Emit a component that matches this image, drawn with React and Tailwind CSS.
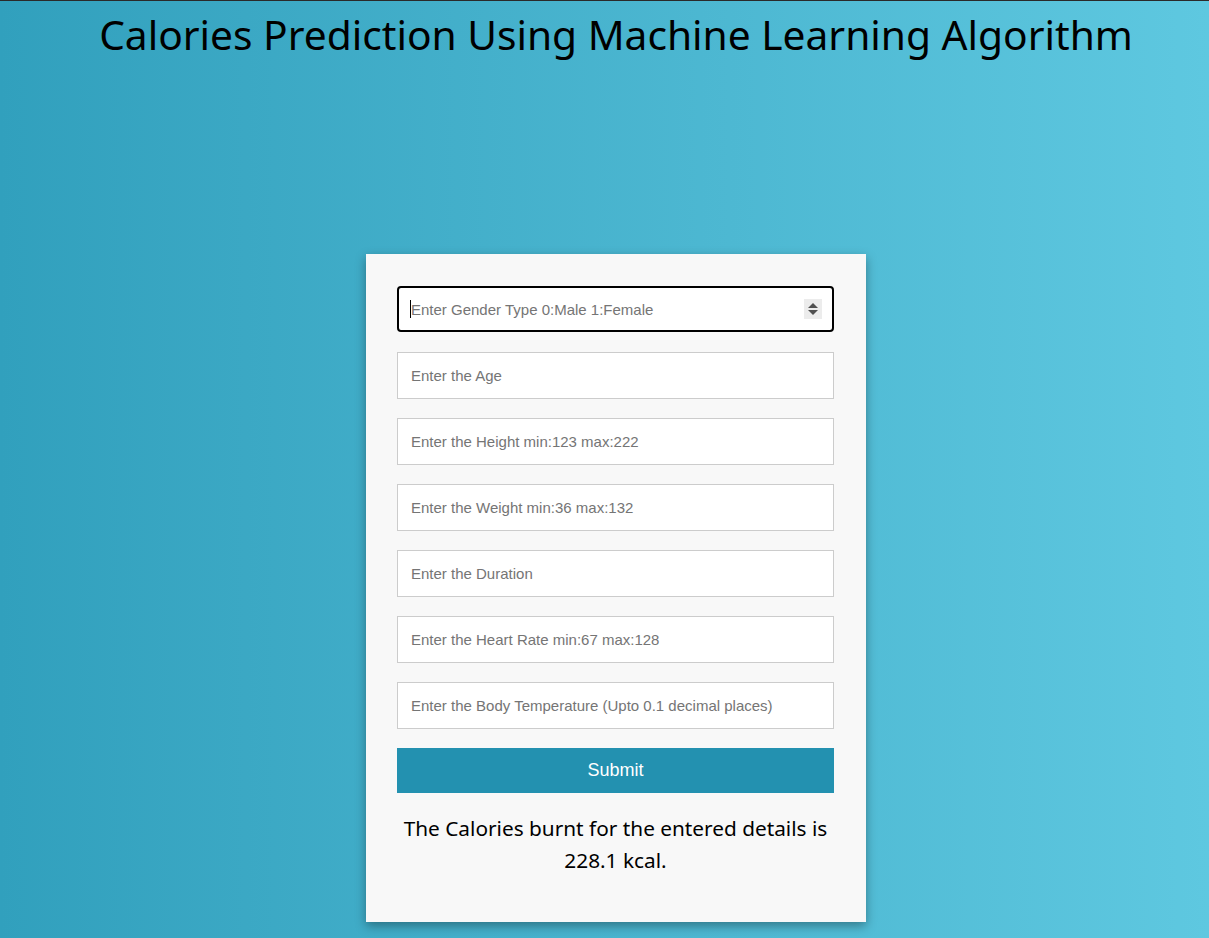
import { useState } from 'react';

const fields = [
  'Enter the Age',
  'Enter the Height min:123 max:222',
  'Enter the Weight min:36 max:132',
  'Enter the Duration',
  'Enter the Heart Rate min:67 max:128',
  'Enter the Body Temperature (Upto 0.1 decimal places)',
];

export default function App() {
  const [values, setValues] = useState({});

  return (
    <div
      className="min-h-screen border-t border-[#2a2a2a] bg-gradient-to-r from-[#31a0bd] to-[#5ec8e0] pl-[23px]"
      style={{ fontFamily: '"Noto Sans", sans-serif' }}
    >
      <h1 className="pt-[5px] text-center text-[40.7px] leading-[56px] text-black">
        Calories Prediction Using Machine Learning Algorithm
      </h1>

      <div className="mx-auto mt-[192px] w-[500px] bg-[#f8f8f8] pl-[31px] pr-[32px] pt-[32px] pb-[46px] shadow-[0_4px_10px_rgba(0,0,0,0.35)]">
        <div className="relative mb-[20px]">
          <input
            type="text"
            placeholder="Enter Gender Type 0:Male 1:Female"
            className="block h-[46px] w-full rounded-[4px] border-2 border-black bg-white pl-[12px] text-[15px] text-black outline-none placeholder:text-[#757575]"
            style={{ fontFamily: '"Liberation Sans", Arial, sans-serif' }}
          />
          <span className="pointer-events-none absolute left-[13px] top-[14px] h-[18px] w-px bg-black" />
          <span className="pointer-events-none absolute right-[12px] top-[13px] flex h-[20px] w-[18px] flex-col items-center justify-center gap-[2px] bg-[#ececec]">
            <span className="h-0 w-0 border-x-[5px] border-b-[5px] border-x-transparent border-b-[#505050]" />
            <span className="h-0 w-0 border-x-[5px] border-t-[5px] border-x-transparent border-t-[#505050]" />
          </span>
        </div>

        {fields.map((f) => (
          <input
            key={f}
            type="text"
            placeholder={f}
            value={values[f] || ''}
            onChange={(e) => setValues({ ...values, [f]: e.target.value })}
            className="mb-[19px] block h-[47px] w-full border border-[#cccccc] bg-white pl-[13px] text-[15px] text-black outline-none placeholder:text-[#757575]"
            style={{ fontFamily: '"Liberation Sans", Arial, sans-serif' }}
          />
        ))}

        <button
          type="button"
          className="mt-[1px] block h-[45px] w-full bg-[#2391b0] text-[18px] text-white"
          style={{ fontFamily: '"Liberation Sans", Arial, sans-serif' }}
        >
          Submit
        </button>

        <p className="mt-[19px] text-center text-[20.8px] leading-[32px] text-black">
          The Calories burnt for the entered details is 228.1 kcal.
        </p>
      </div>
    </div>
  );
}
